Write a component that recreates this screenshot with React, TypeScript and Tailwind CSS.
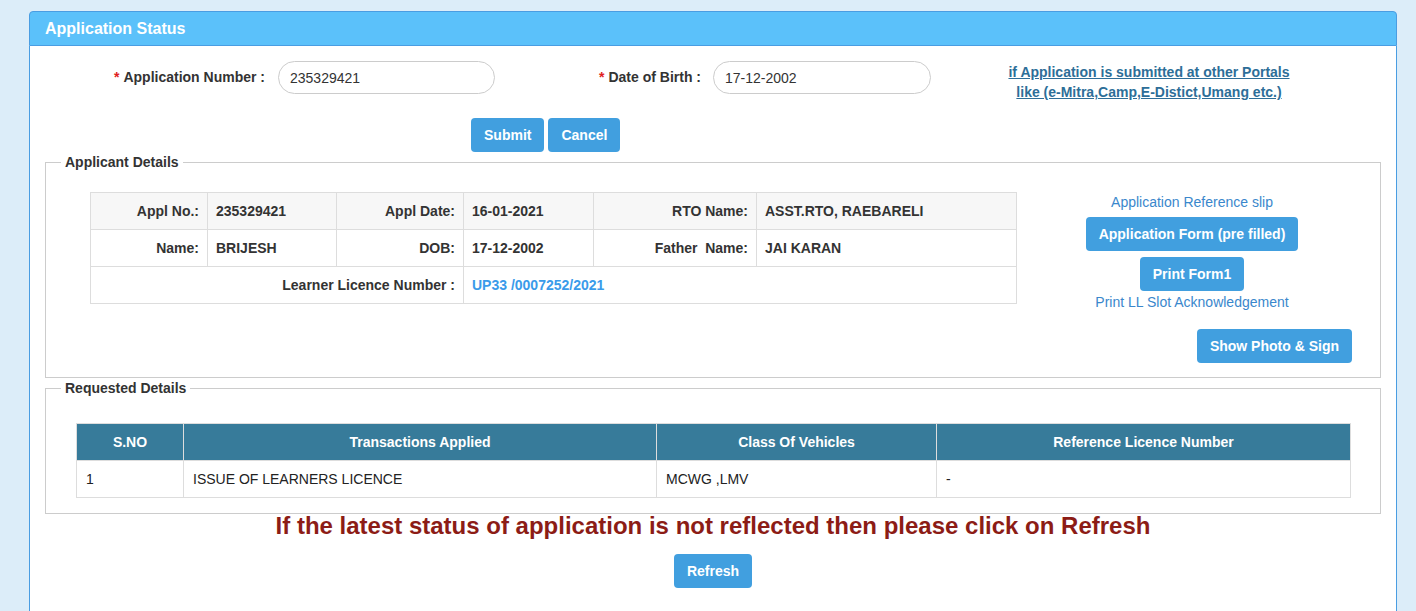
import React from "react";

const Btn = ({ children, className = "" }: { children: React.ReactNode; className?: string }) => (
  <button
    className={`h-[34px] px-[13px] rounded-[4px] bg-[#419fdf] text-white font-bold text-[14px] leading-[20px] ${className}`}
  >
    {children}
  </button>
);

const applicant = [
  [
    ["Appl No.:", "235329421"],
    ["Appl Date:", "16-01-2021"],
    ["RTO Name:", "ASST.RTO, RAEBARELI"],
  ],
  [
    ["Name:", "BRIJESH"],
    ["DOB:", "17-12-2002"],
    ["Father\u00a0 Name:", "JAI KARAN"],
  ],
];

const App = () => {
  return (
    <div className="min-h-screen bg-[#dcedf9] pt-[11px] pl-[29px] pr-[19px] font-['Liberation_Sans',Arial,sans-serif] text-[#333]">
      <div className="w-[1368px]">
        <div className="h-[35px] bg-[#5bc1fa] border border-[#4a9de2] rounded-t-[4px] px-[15px] flex items-center">
          <h3 className="text-white font-bold text-[16px]">Application Status</h3>
        </div>

        <div className="bg-white border-x border-[#4a9de2] pt-[15px] pb-[30px]">
          {/* search row */}
          <div className="flex items-start h-[33px]">
            <label className="w-[235px] h-[33px] flex items-center justify-end font-bold text-[14px]">
              <span className="text-[#e02020] mr-[4px]">*</span>Application Number :
            </label>
            <input
              className="ml-[13px] w-[217px] h-[33px] rounded-full border border-[#ccc] px-[11px] text-[14px] text-[#333] outline-none"
              defaultValue="235329421"
            />
            <label className="w-[206px] h-[33px] flex items-center justify-end font-bold text-[14px]">
              <span className="text-[#e02020] mr-[4px]">*</span>Date of Birth :
            </label>
            <input
              className="ml-[12px] w-[218px] h-[33px] rounded-full border border-[#ccc] px-[11px] text-[14px] text-[#333] outline-none"
              defaultValue="17-12-2002"
            />
            <a className="ml-[60px] mt-[1px] w-[316px] text-center font-bold text-[14px] leading-[20px] text-[#2d6e98] underline">
              if Application is submitted at other Portals
              <br />
              like (e-Mitra,Camp,E-Distict,Umang etc.)
            </a>
          </div>

          <div className="flex gap-[4px] ml-[441px] mt-[24px]">
            <Btn>Submit</Btn>
            <Btn className="px-[12px]">Cancel</Btn>
          </div>

          {/* applicant details */}
          <fieldset className="mx-[15px] mt-[2px] border border-[#ccc]">
            <legend className="ml-[15px] px-[4px] font-bold text-[14px] leading-[16px] text-[#333]">
              Applicant Details
            </legend>
            <div className="flex pl-[44px] pr-[28px] pt-[22px] pb-[14px]">
              <div>
                <table className="w-[926px] table-fixed border-collapse text-[14px] font-bold text-[#333]">
                  <colgroup>
                    <col className="w-[117px]" />
                    <col className="w-[129px]" />
                    <col className="w-[127px]" />
                    <col className="w-[130px]" />
                    <col className="w-[163px]" />
                    <col className="w-[260px]" />
                  </colgroup>
                  <tbody>
                    {applicant.map((row, i) => (
                      <tr key={i} className={i === 0 ? "bg-[#f7f7f7]" : ""}>
                        {row.map(([label, value]) => (
                          <React.Fragment key={label}>
                            <td className="border border-[#ddd] px-[8px] py-[8px] leading-[20px] text-right">{label}</td>
                            <td className="border border-[#ddd] px-[8px] py-[8px] leading-[20px]">{value}</td>
                          </React.Fragment>
                        ))}
                      </tr>
                    ))}
                    <tr>
                      <td colSpan={3} className="border border-[#ddd] px-[8px] py-[8px] leading-[20px] text-right">
                        Learner Licence Number :
                      </td>
                      <td colSpan={3} className="border border-[#ddd] px-[8px] py-[8px] leading-[20px] text-[#3a9bea]">
                        UP33 /0007252/2021
                      </td>
                    </tr>
                  </tbody>
                </table>
              </div>
              <div className="ml-[15px] w-[320px] flex flex-col items-center">
                <a className="text-[14px] leading-[20px] text-[#3a87cc]">Application Reference slip</a>
                <Btn className="mt-[5px] h-[33px]">Application Form (pre filled)</Btn>
                <Btn className="mt-[6px] h-[33px]">Print Form1</Btn>
                <a className="mt-[1px] text-[14px] leading-[20px] text-[#3a87cc]">Print LL Slot Acknowledgement</a>
                <div className="self-stretch flex justify-end mt-[17px]">
                  <Btn className="h-[33px]">Show Photo &amp; Sign</Btn>
                </div>
              </div>
            </div>
          </fieldset>

          {/* requested details */}
          <fieldset className="mx-[15px] mt-[2px] border border-[#ccc]">
            <legend className="ml-[15px] px-[4px] font-bold text-[14px] leading-[16px] text-[#333]">
              Requested Details
            </legend>
            <div className="pl-[30px] pr-[29px] pt-[27px] pb-[15px]">
              <table className="w-full table-fixed border-collapse text-[14px]">
                <colgroup>
                  <col className="w-[107px]" />
                  <col className="w-[473px]" />
                  <col className="w-[280px]" />
                  <col />
                </colgroup>
                <thead>
                  <tr className="bg-[#377b9a] text-white">
                    <th className="border border-[#ddd] py-[8px] leading-[20px] font-bold">S.NO</th>
                    <th className="border border-[#ddd] py-[8px] leading-[20px] font-bold">Transactions Applied</th>
                    <th className="border border-[#ddd] py-[8px] leading-[20px] font-bold">Class Of Vehicles</th>
                    <th className="border border-[#ddd] py-[8px] leading-[20px] font-bold">Reference Licence Number</th>
                  </tr>
                </thead>
                <tbody className="text-[#222]">
                  <tr>
                    <td className="border border-[#ddd] px-[9px] py-[8px] leading-[20px]">1</td>
                    <td className="border border-[#ddd] px-[9px] py-[8px] leading-[20px]">ISSUE OF LEARNERS LICENCE</td>
                    <td className="border border-[#ddd] px-[9px] py-[8px] leading-[20px]">MCWG ,LMV</td>
                    <td className="border border-[#ddd] px-[9px] py-[8px] leading-[20px]">-</td>
                  </tr>
                </tbody>
              </table>
            </div>
          </fieldset>

          <p className="text-center font-bold text-[24px] leading-[24px] text-[#8c1c16]">
            If the latest status of application is not reflected then please click on Refresh
          </p>
          <div className="flex justify-center mt-[16px]">
            <Btn className="h-[33px]">Refresh</Btn>
          </div>
        </div>
      </div>
    </div>
  );
};

export default App;
